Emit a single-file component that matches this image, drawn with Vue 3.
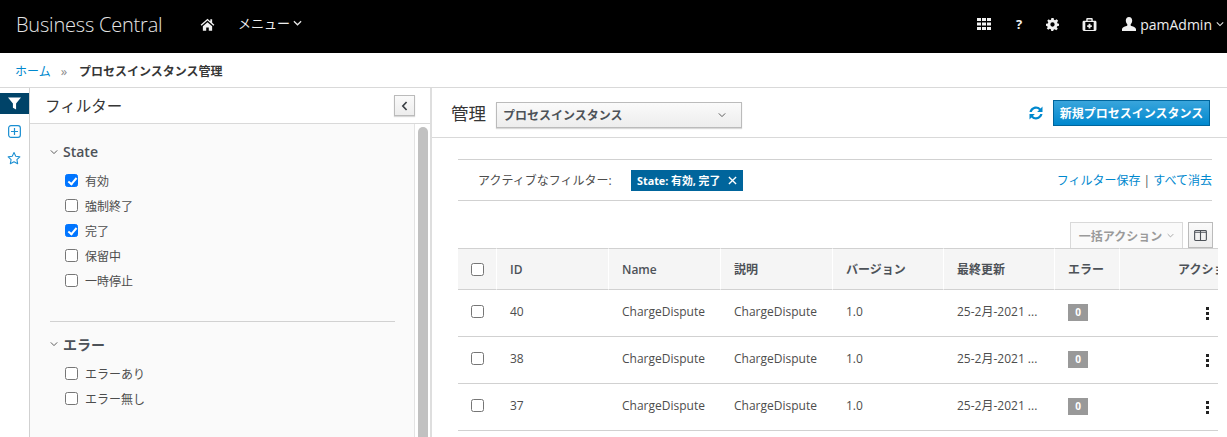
<template>
  <div class="page">
    <header class="topbar">
      <div class="brand">Business Central</div>
      <svg class="home" viewBox="0 0 16 14" width="15" height="13"><path d="M8 0.800 0.600 7.200l1 1.100L8 2.800l6.400 5.500 1-1.100L13 5.100V1.400h-2v2L8 .800zM3 9v4.600h3.600v-3.400h2.800v3.400H13V9L8 4.700 3 9z" fill="#f0f0f0"/></svg>
      <div class="menu">メニュー<svg class="chev" viewBox="0 0 10 6" width="9" height="6"><path d="M1 1l4 4 4-4" fill="none" stroke="#e8e8e8" stroke-width="1.400"/></svg></div>
      <div class="top-right">
        <svg viewBox="0 0 14 12" width="14" height="12" fill="#f0f0f0"><rect x="0" y="0" width="4" height="3"/><rect x="5" y="0" width="4" height="3"/><rect x="10" y="0" width="4" height="3"/><rect x="0" y="4.500" width="4" height="3"/><rect x="5" y="4.500" width="4" height="3"/><rect x="10" y="4.500" width="4" height="3"/><rect x="0" y="9" width="4" height="3"/><rect x="5" y="9" width="4" height="3"/><rect x="10" y="9" width="4" height="3"/></svg>
        <span class="help">?</span>
        <svg viewBox="0 0 24 24" width="13" height="13"><path fill="#f0f0f0" fill-rule="evenodd" d="M10 0h4l.7 3.400 2 .8L19.600 2.300l2.800 2.800-1.900 2.900.8 2L24 10.700v3.600l-3.400.7-.8 2 1.900 2.900-2.800 2.800-2.900-1.900-2 .8L13.300 24h-3.600l-.7-3.400-2-.8-2.900 1.900-2.800-2.800L3.200 17l-.8-2L0 14.300v-3.600L3.400 10l.8-2-1.900-2.900 2.800-2.800L7.200 4.200l2-.8L10 0zM12 8a4 4 0 100 8 4 4 0 000-8z"/></svg>
        <svg viewBox="0 0 15 14" width="15" height="13"><path fill="#f0f0f0" fill-rule="evenodd" d="M5 0h5a1 1 0 011 1v2h2.500A1.500 1.500 0 0115 4.500v8a1.500 1.500 0 01-1.500 1.500h-12A1.500 1.500 0 010 12.500v-8A1.500 1.500 0 011.500 3H4V1a1 1 0 011-1zm.5 1.500V3h4V1.500h-4zM3 4.200v8.600h9V4.200H3zm3.500 2H8.500v1.500H10v2H8.500v1.500h-2V9.700H5v-2h1.500V6.200z"/></svg>
        <div class="user">
          <svg viewBox="0 0 14 14" width="14" height="14"><path fill="#f0f0f0" d="M7 0c2 0 3.200 1.500 3.200 3.600 0 1.500-.7 3-1.500 3.700v1.300c0 .5 4.800 1.300 5.300 3.400v2H0v-2c.5-2.100 5.300-2.900 5.300-3.400V7.300C4.500 6.600 3.800 5.100 3.800 3.600 3.800 1.500 5 0 7 0z"/></svg>
          <span>pamAdmin</span>
          <svg viewBox="0 0 10 6" width="8" height="6"><path d="M1 1l4 4 4-4" fill="none" stroke="#e8e8e8" stroke-width="1.300"/></svg>
        </div>
      </div>
    </header>

    <nav class="crumbs">
      <a class="link">ホーム</a>
      <span class="sep">»</span>
      <b>プロセスインスタンス管理</b>
    </nav>

    <div class="workspace">
      <aside class="rail">
        <div class="rail-active">
          <svg viewBox="0 0 14 14" width="13" height="13"><path d="M0 .5h14L8.700 7v6.500l-3.400-1.800V7z" fill="#fff"/></svg>
        </div>
        <svg class="rail-icon" viewBox="0 0 14 14" width="13" height="13"><rect x=".7" y=".7" width="12.600" height="12.600" rx="2.500" fill="none" stroke="#1b8fd2" stroke-width="1.300"/><path d="M7 3.200v7.600M3.200 7h7.600" stroke="#1b8fd2" stroke-width="1.300"/></svg>
        <svg class="rail-icon star" viewBox="0 0 16 15" width="14" height="14"><path d="M8 1.300l2 4.300 4.700.6-3.400 3.200.9 4.600L8 11.700 3.800 14l.9-4.600L1.300 6.200 6 5.600z" fill="none" stroke="#1b8fd2" stroke-width="1.200" stroke-linejoin="round"/></svg>
      </aside>

      <section class="filters">
        <div class="filters-head">
          <h2>フィルター</h2>
          <button class="collapse">
            <svg viewBox="0 0 8 12" width="7" height="10"><path d="M6.500 1.200 2 6l4.500 4.800" fill="none" stroke="#3a3f44" stroke-width="2"/></svg>
          </button>
        </div>
        <div class="filters-body">
          <div class="filters-scroll">
            <div v-for="group in groups" :key="group.title" class="group" :class="group.cls">
              <div class="group-title">
                <svg viewBox="0 0 10 6" width="8" height="6"><path d="M1 1l4 4 4-4" fill="none" stroke="#555" stroke-width="1.200"/></svg>
                <span>{{ group.title }}</span>
              </div>
              <label v-for="item in group.items" :key="item.label" class="check-row">
                <input type="checkbox" :checked="item.on" class="cb" />
                <span>{{ item.label }}</span>
              </label>
            </div>
          </div>
          <div class="scrollbar"><div class="thumb"></div></div>
        </div>
      </section>

      <main class="content">
        <div class="content-head">
          <span class="title">管理</span>
          <div class="select">
            <span>プロセスインスタンス</span>
            <svg viewBox="0 0 10 6" width="8" height="6"><path d="M1 1l4 4 4-4" fill="none" stroke="#555" stroke-width="1.200"/></svg>
          </div>
          <svg class="refresh" viewBox="0 0 16 16" width="16" height="16"><path fill="#0088ce" d="M8 1.500c1.900 0 3.500.8 4.600 2L14.500 1.600V7H9.100l2-2C10.300 4.100 9.200 3.700 8 3.700 6 3.700 4.300 5 3.800 6.900H1.500C2.100 3.800 4.800 1.500 8 1.500zM1.500 9h5.400l-2 2c.8.900 1.900 1.300 3.100 1.300 2 0 3.700-1.300 4.200-3.200h2.300c-.6 3.100-3.300 5.400-6.500 5.400-1.900 0-3.500-.8-4.600-2l-1.900 1.900V9z"/></svg>
          <button class="primary">新規プロセスインスタンス</button>
        </div>

        <div class="content-body">
          <div class="active-filters">
            <span class="af-label">アクティブなフィルター:</span>
            <span class="tag">State: 有効, 完了<svg viewBox="0 0 10 10" width="9" height="9"><path d="M1 1l8 8M9 1l-8 8" stroke="#fff" stroke-width="1.500"/></svg></span>
            <span class="af-links"><a class="link">フィルター保存</a> | <a class="link">すべて消去</a></span>
          </div>

          <div class="toolbar">
            <button class="bulk">一括アクション
              <svg viewBox="0 0 10 6" width="7" height="5"><path d="M1 1l4 4 4-4" fill="none" stroke="#9a9a9a" stroke-width="1.200"/></svg>
            </button>
            <button class="columns">
              <svg viewBox="0 0 14 12" width="13" height="11"><rect x=".6" y=".6" width="12.800" height="10.800" rx="1" fill="none" stroke="#4d5258" stroke-width="1.200"/><path d="M7 1v10M1 2.500h12" stroke="#4d5258" stroke-width="1.200"/></svg>
            </button>
          </div>

          <div class="table-clip">
            <table class="grid">
              <colgroup>
                <col class="c-check" /><col class="c-wide" /><col class="c-wide" /><col class="c-wide" />
                <col class="c-mid" /><col class="c-mid" /><col class="c-err" /><col class="c-act" />
              </colgroup>
              <thead>
                <tr>
                  <th class="cb-cell"><input type="checkbox" class="cb" /></th>
                  <th>ID</th>
                  <th>Name</th>
                  <th>説明</th>
                  <th>バージョン</th>
                  <th>最終更新</th>
                  <th>エラー</th>
                  <th class="act-head">アクション</th>
                </tr>
              </thead>
              <tbody>
                <tr v-for="row in rows" :key="row">
                  <td class="cb-cell"><input type="checkbox" class="cb" /></td>
                  <td>{{ row }}</td>
                  <td>ChargeDispute</td>
                  <td>ChargeDispute</td>
                  <td>1.0</td>
                  <td>25-2月-2021 ...</td>
                  <td><span class="badge">0</span></td>
                  <td class="kebab-cell"><span class="kebab"><i></i><i></i><i></i></span></td>
                </tr>
              </tbody>
            </table>
          </div>
        </div>
      </main>
    </div>
  </div>
</template>

<script setup>
const groups = [
  {
    title: 'State',
    cls: 'first',
    items: [
      { label: '有効', on: true },
      { label: '強制終了', on: false },
      { label: '完了', on: true },
      { label: '保留中', on: false },
      { label: '一時停止', on: false },
    ],
  },
  {
    title: 'エラー',
    cls: 'second',
    items: [
      { label: 'エラーあり', on: false },
      { label: 'エラー無し', on: false },
    ],
  },
]

const rows = [40, 38, 37]
</script>

<style>
html, body {
  margin: 0;
  overflow: hidden;
  background: #fff;
}
</style>

<style scoped>
.page {
  width: 1227px;
  height: 437px;
  overflow: hidden;
  display: flex;
  flex-direction: column;
  font-family: "Open Sans", "Noto Sans CJK JP", sans-serif;
  font-size: 12px;
  color: #363636;
}

.topbar {
  height: 53px;
  flex: none;
  box-sizing: border-box;
  background: #000;
  color: #eee;
  display: flex;
  align-items: center;
  padding: 0 0 5px 16px;
}

.brand {
  font-family: "Open Sans", sans-serif;
  font-weight: 300;
  font-size: 20px;
  letter-spacing: -0.2px;
  color: #e6e6e6;
  width: 184px;
}

.home {
  margin-right: 23px;
}

.menu {
  font-size: 13px;
  display: flex;
  align-items: center;
  gap: 3px;
  margin-bottom: 3px;
}

.top-right {
  margin-left: auto;
  display: flex;
  align-items: center;
}

.top-right > svg:nth-child(1) { margin-right: 25px; }
.help {
  font-weight: 700;
  font-size: 13px;
  margin-right: 24px;
  font-family: "Open Sans", sans-serif;
}
.top-right > svg:nth-child(3) { margin-right: 23px; }
.top-right > svg:nth-child(4) { margin-right: 25px; }

.user {
  display: flex;
  align-items: center;
  font-size: 14px;
  gap: 4px;
  padding-right: 3px;
}

.crumbs {
  height: 35px;
  flex: none;
  box-sizing: border-box;
  border-bottom: 1px solid #d9d9d9;
  display: flex;
  align-items: center;
  padding: 2px 0 0 15px;
  font-size: 12px;
}

.crumbs b {
  font-weight: 700;
  color: #363636;
  font-size: 12px;
}

.sep {
  color: #8c8c8c;
  font-size: 13px;
  margin: 0 12px 0 10px;
}

.link {
  color: #0088ce;
}

.workspace {
  flex: 1;
  display: flex;
  min-height: 0;
}

.rail {
  width: 29px;
  flex: none;
  border-right: 1px solid #d1d1d1;
  display: flex;
  flex-direction: column;
  align-items: center;
  padding-top: 5px;
}

.rail-active {
  width: 29px;
  height: 21px;
  background: #004368;
  display: flex;
  align-items: center;
  justify-content: center;
}

.rail-icon {
  margin-top: 11px;
  margin-right: 1px;
}

.rail-icon.star {
  margin-top: 13px;
}

.filters {
  width: 400px;
  flex: none;
  border-right: 2px solid #dedede;
  display: flex;
  flex-direction: column;
}

.filters-head {
  height: 36px;
  box-sizing: border-box;
  border-bottom: 1px solid #d9d9d9;
  display: flex;
  align-items: center;
  justify-content: space-between;
  padding: 0 15px 0 15px;
}

.filters-head h2 {
  margin: 0;
  font-size: 15.500px;
  font-weight: 400;
  color: #363636;
}

.collapse {
  width: 21px;
  height: 21px;
  padding: 0;
  background: linear-gradient(#fafafa, #ededed);
  border: 1px solid #bbb;
  box-shadow: 0 1px 1px rgba(0, 0, 0, 0.15);
  display: flex;
  align-items: center;
  justify-content: center;
}

.filters-body {
  flex: 1;
  display: flex;
  min-height: 0;
}

.filters-scroll {
  width: 385px;
  box-sizing: border-box;
  background: #fafafa;
  border-right: 1px solid #e3e3e3;
  padding: 0 19px 0 20px;
}

.scrollbar {
  flex: 1;
  background: #fff;
  padding: 3px 2px 0 3px;
}

.thumb {
  height: 100%;
  background: #c1c1c1;
  border-radius: 5px 5px 0 0;
}

.group.first {
  padding-top: 18px;
  height: 198px;
  box-sizing: border-box;
  border-bottom: 1px solid #d1d1d1;
}

.group.second {
  padding-top: 12px;
}

.group-title {
  display: flex;
  align-items: center;
  gap: 5px;
  font-weight: 600;
  font-size: 14px;
  color: #4d5258;
  height: 19px;
  margin-bottom: 7px;
}

.group.second .group-title {
  margin-bottom: 8px;
}

.check-row {
  display: flex;
  align-items: center;
  height: 25px;
  padding-left: 15px;
  gap: 7px;
  font-size: 12px;
  color: #4d4d4d;
}

.cb {
  appearance: none;
  width: 13px;
  height: 13px;
  margin: 0;
  box-sizing: border-box;
  border: 1px solid #767676;
  border-radius: 2.500px;
  background: #fff;
  position: relative;
}

.cb:checked {
  background: #0075ff;
  border-color: #0075ff;
}

.cb:checked::after {
  content: "";
  position: absolute;
  left: 3.500px;
  top: 0.500px;
  width: 3px;
  height: 7px;
  border: solid #fff;
  border-width: 0 2px 2px 0;
  transform: rotate(40deg);
}

.content {
  flex: 1;
  min-width: 0;
  display: flex;
  flex-direction: column;
}

.content-head {
  height: 50px;
  flex: none;
  box-sizing: border-box;
  border-bottom: 1px solid #d9d9d9;
  display: flex;
  align-items: center;
  padding: 0 17px 0 19px;
}

.title {
  font-size: 17.500px;
  color: #363636;
  margin-right: 10px;
}

.select {
  width: 246px;
  height: 26px;
  margin-top: 4px;
  box-sizing: border-box;
  border: 1px solid #bbb;
  background: linear-gradient(#fafafa, #ededed);
  box-shadow: 0 1px 1px rgba(0, 0, 0, 0.15);
  display: flex;
  align-items: center;
  justify-content: space-between;
  padding: 0 15px 0 6px;
  font-weight: 700;
  font-size: 12px;
  color: #4d5258;
}

.refresh {
  margin-left: auto;
  margin-right: 9px;
}

.primary {
  width: 157px;
  height: 26px;
  padding: 0;
  background: linear-gradient(#39a5dc, #0088ce);
  border: 1px solid #00659c;
  color: #fff;
  font-family: inherit;
  font-weight: 700;
  font-size: 12px;
  white-space: nowrap;
}

.content-body {
  flex: 1;
  padding: 21px 0 0 26px;
  min-height: 0;
}

.active-filters {
  width: 754px;
  height: 42px;
  box-sizing: border-box;
  border-top: 1px solid #d1d1d1;
  border-bottom: 1px solid #d1d1d1;
  display: flex;
  align-items: center;
  padding-left: 20px;
  font-size: 12px;
}

.af-label {
  width: 153px;
  color: #4d4d4d;
}

.tag {
  background: #00659c;
  color: #fff;
  height: 21px;
  padding: 0 6px;
  display: flex;
  align-items: center;
  gap: 8px;
  font-weight: 700;
  font-size: 10.800px;
}

.af-links {
  margin-left: auto;
  color: #4d5258;
  font-size: 12px;
}

.toolbar {
  height: 47px;
  width: 755px;
  box-sizing: border-box;
  display: flex;
  justify-content: flex-end;
  align-items: flex-end;
  gap: 5px;
}

.bulk {
  width: 113px;
  height: 26px;
  padding: 0;
  border: 1px solid #d9d9d9;
  border-bottom: none;
  background: #fafafa;
  color: #9a9a9a;
  font-family: inherit;
  font-weight: 700;
  font-size: 12px;
  display: flex;
  align-items: center;
  justify-content: center;
  gap: 5px;
}

.columns {
  width: 25px;
  height: 26px;
  padding: 0;
  border: 1px solid #bbb;
  background: linear-gradient(#fafafa, #ededed);
  display: flex;
  align-items: center;
  justify-content: center;
}

.table-clip {
  width: 760px;
  overflow: hidden;
}

.grid {
  table-layout: fixed;
  width: 782px;
  border-collapse: separate;
  border-spacing: 0;
}

.c-check { width: 39px; }
.c-wide { width: 112px; }
.c-mid { width: 111px; }
.c-err { width: 65px; }
.c-act { width: 120px; }

.grid th {
  height: 40px;
  padding: 0 0 0 13px;
  background: #f5f5f5;
  border-top: 1px solid #d1d1d1;
  border-bottom: 1px solid #d1d1d1;
  border-right: 1px solid #fff;
  text-align: left;
  font-weight: 600;
  font-size: 12px;
  color: #4d5258;
}

.grid td {
  height: 42px;
  padding: 0 0 4px 13px;
  border-bottom: 1px solid #d1d1d1;
  font-size: 12px;
  color: #4d4d4d;
  white-space: nowrap;
  overflow: hidden;
}

.grid .cb-cell {
  padding-left: 13px;
}

.grid .cb-cell .cb {
  display: block;
}

.grid th.act-head {
  padding-left: 58px;
  white-space: nowrap;
}

.badge {
  display: inline-block;
  width: 20px;
  height: 17px;
  line-height: 17px;
  background: #999;
  color: #fff;
  font-weight: 700;
  font-size: 10px;
  text-align: center;
  vertical-align: middle;
  margin-top: 3px;
}

.kebab {
  display: inline-flex;
  flex-direction: column;
  gap: 2px;
  margin-left: 73px;
  vertical-align: middle;
  margin-top: 3px;
}

.kebab i {
  display: block;
  width: 3px;
  height: 3px;
  background: #222;
}
</style>
